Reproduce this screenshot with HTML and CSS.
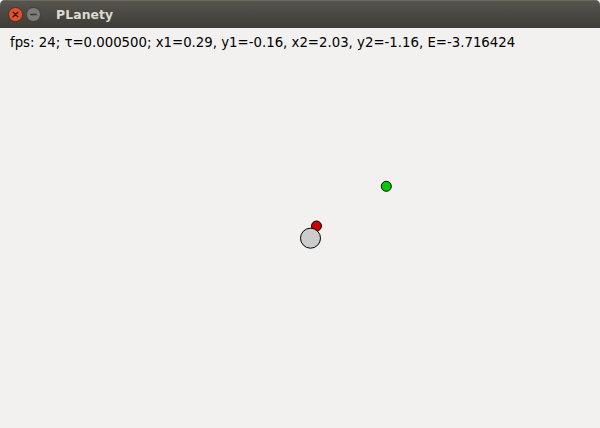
FILE: index.html
```html
<!DOCTYPE html>
<html>
<head>
<meta charset="utf-8">
<link rel="stylesheet" href="styles.css">
</head>
<body>
<div class="window">
  <div class="titlebar">
    <div class="buttons">
      <span class="btn close">
        <svg width="15" height="15" viewBox="0 0 15 15"><circle cx="7.5" cy="7.5" r="7" fill="#e5532b" stroke="#3b2a22" stroke-width="0.8"/><path d="M5.2 5.2 L9.8 9.8 M9.8 5.2 L5.2 9.8" stroke="#3a1a10" stroke-width="1.5" stroke-linecap="round"/></svg>
      </span>
      <span class="btn min">
        <svg width="15" height="15" viewBox="0 0 15 15"><circle cx="7.5" cy="7.5" r="7" fill="#7d7c77" stroke="#3a3935" stroke-width="0.8"/><path d="M4.8 7.5 L10.2 7.5" stroke="#3a3935" stroke-width="1.6" stroke-linecap="round"/></svg>
      </span>
    </div>
    <div class="title">PLanety</div>
  </div>
  <div class="content">
    <div class="status">fps: 24; τ=0.000500; x1=0.29, y1=-0.16, x2=2.03, y2=-1.16, E=-3.716424</div>
    <svg class="canvas" width="600" height="400" viewBox="0 28 600 400">
      <circle cx="386.3" cy="186.3" r="5" fill="#00cc00" stroke="#000" stroke-width="1"/>
      <circle cx="316.5" cy="226" r="5" fill="#cc0000" stroke="#000" stroke-width="1"/>
      <circle cx="310.5" cy="238.2" r="10" fill="#cccccc" stroke="#000" stroke-width="1"/>
    </svg>
  </div>
</div>
</body>
</html>
```

FILE: styles.css
```css
html, body {
  margin: 0;
  padding: 0;
  width: 600px;
  height: 428px;
  overflow: hidden;
  background: #f2f1f0;
}
.window {
  width: 600px;
  height: 428px;
  display: flex;
  flex-direction: column;
}
.titlebar {
  height: 28px;
  flex: 0 0 28px;
  background: linear-gradient(#57554e, #3d3c37);
  border-radius: 5px 5px 0 0;
  display: flex;
  align-items: center;
  box-shadow: inset 0 1px 0 #6b6960;
}
.buttons {
  display: flex;
  gap: 3px;
  padding-left: 8px;
}
.btn {
  width: 15px;
  height: 15px;
  display: block;
}
.btn svg { display: block; }
.title {
  margin-left: 15px;
  font-family: "DejaVu Sans", sans-serif;
  font-weight: bold;
  font-size: 12.4px;
  color: #dfdbd2;
  letter-spacing: 0.1px;
}
.content {
  position: relative;
  flex: 1;
  background: #f2f1f0;
}
.status {
  position: relative;
  z-index: 1;
  padding: 7px 0 0 10px;
  font-family: "DejaVu Sans", sans-serif;
  font-size: 13.3px;
  color: #000;
  line-height: 16px;
}
.canvas {
  position: absolute;
  left: 0;
  top: 0;
}
```
